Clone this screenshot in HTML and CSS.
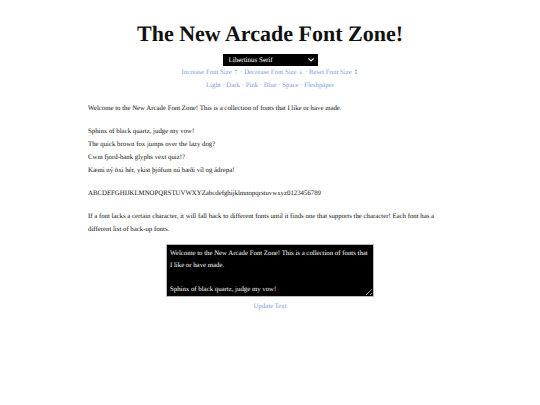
FILE: index.html
```html
<!DOCTYPE html>
<html>
<head>
<meta charset="utf-8">
<link rel="stylesheet" href="styles.css">
</head>
<body>
<header class="top">
  <h1 class="title">The New Arcade Font Zone!</h1>
  <div class="select-wrap">
    <select class="font-select"><option>Libertinus Serif</option></select>
    <svg class="chev" width="6" height="4" viewBox="0 0 6 4"><path d="M0.5 0.5 L3 3 L5.5 0.5" fill="none" stroke="#fff" stroke-width="1.1"/></svg>
  </div>
  <nav class="links">
    <div><a href="#">Increase Font Size <span class="arr">⇡</span></a> · <a href="#">Decrease Font Size <span class="arr">⇣</span></a> · <a href="#">Reset Font Size <span class="arr">↕</span></a></div>
    <div><a href="#">Light</a> · <a href="#">Dark</a> · <a href="#">Pink</a> · <a href="#">Blue</a> · <a href="#">Space</a> · <a href="#">Fleshpaper</a></div>
  </nav>
</header>
<main class="content">
  <p>Welcome to the New Arcade Font Zone! This is a collection of fonts that I like or have made.</p>
  <p>Sphinx of black quartz, judge my vow!<br>The quick brown fox jumps over the lazy dog?<br>Cwm fjord-bank glyphs vext quiz!?<br>Kæmi ný öxi hér, ykist þjófum nú bæði víl og ádrepa!</p>
  <p class="alpha">ABCDEFGHIJKLMNOPQRSTUVWXYZabcdefghijklmnopqrstuvwxyz0123456789</p>
  <p class="note">If a font lacks a certain character, it will fall back to different fonts until it finds one that supports the character! Each font has a different list of back-up fonts.</p>
  <div class="editor">
    <textarea class="box">Welcome to the New Arcade Font Zone! This is a collection of fonts that I like or have made.

Sphinx of black quartz, judge my vow!</textarea>
    <a href="#" class="update">Update Text</a>
  </div>
</main>
</body>
</html>
```
FILE: styles.css
```css
html, body {
  margin: 0;
  padding: 0;
  background: #fff;
  color: #111;
  font-family: "Liberation Serif", "DejaVu Serif", serif;
  text-rendering: geometricPrecision;
}
.top {
  display: flex;
  flex-direction: column;
  align-items: center;
  padding-top: 20px;
}
.title {
  margin: 0;
  font-size: 22px;
  line-height: 28px;
  font-weight: bold;
  color: #111;
}
.select-wrap {
  position: relative;
  margin-top: 6px;
  width: 95px;
  height: 12px;
}
.font-select {
  display: block;
  width: 95px;
  height: 12px;
  background: #000;
  color: #fff;
  border: none;
  border-radius: 0;
  -webkit-appearance: none;
  appearance: none;
  font-family: inherit;
  font-size: 7px;
  line-height: 12px;
  padding: 0 0 0 6px;
  outline: none;
  text-rendering: geometricPrecision;
}
.chev {
  position: absolute;
  right: 4px;
  top: 4px;
  pointer-events: none;
}
.links {
  margin-top: 0;
  text-align: center;
  font-size: 6.8px;
  line-height: 13px;
  color: #7b9de0;
}
.arr {
  font-family: "DejaVu Sans", sans-serif;
  font-size: 6px;
}
a {
  color: #7b9de0;
  text-decoration: none;
}
.content {
  width: 364px;
  margin: 5px auto 0;
  font-size: 6.8px;
  line-height: 13px;
}
.content p {
  margin: 10px 0;
}
.content p.alpha {
  margin-top: 9px;
}
.content p.note {
  margin-top: 10px;
  margin-bottom: 8px;
}
.editor {
  display: flex;
  flex-direction: column;
  align-items: center;
  margin-top: 0;
}
.box {
  width: 208px;
  height: 53px;
  box-sizing: border-box;
  background: #000;
  color: #fff;
  border: 1px solid #bbb;
  font-family: inherit;
  font-size: 6.8px;
  line-height: 12px;
  padding: 3px 3px;
  resize: both;
  overflow: hidden;
  text-rendering: geometricPrecision;
}
.update {
  margin-top: 4px;
  font-size: 6.8px;
  line-height: 12px;
}
```
